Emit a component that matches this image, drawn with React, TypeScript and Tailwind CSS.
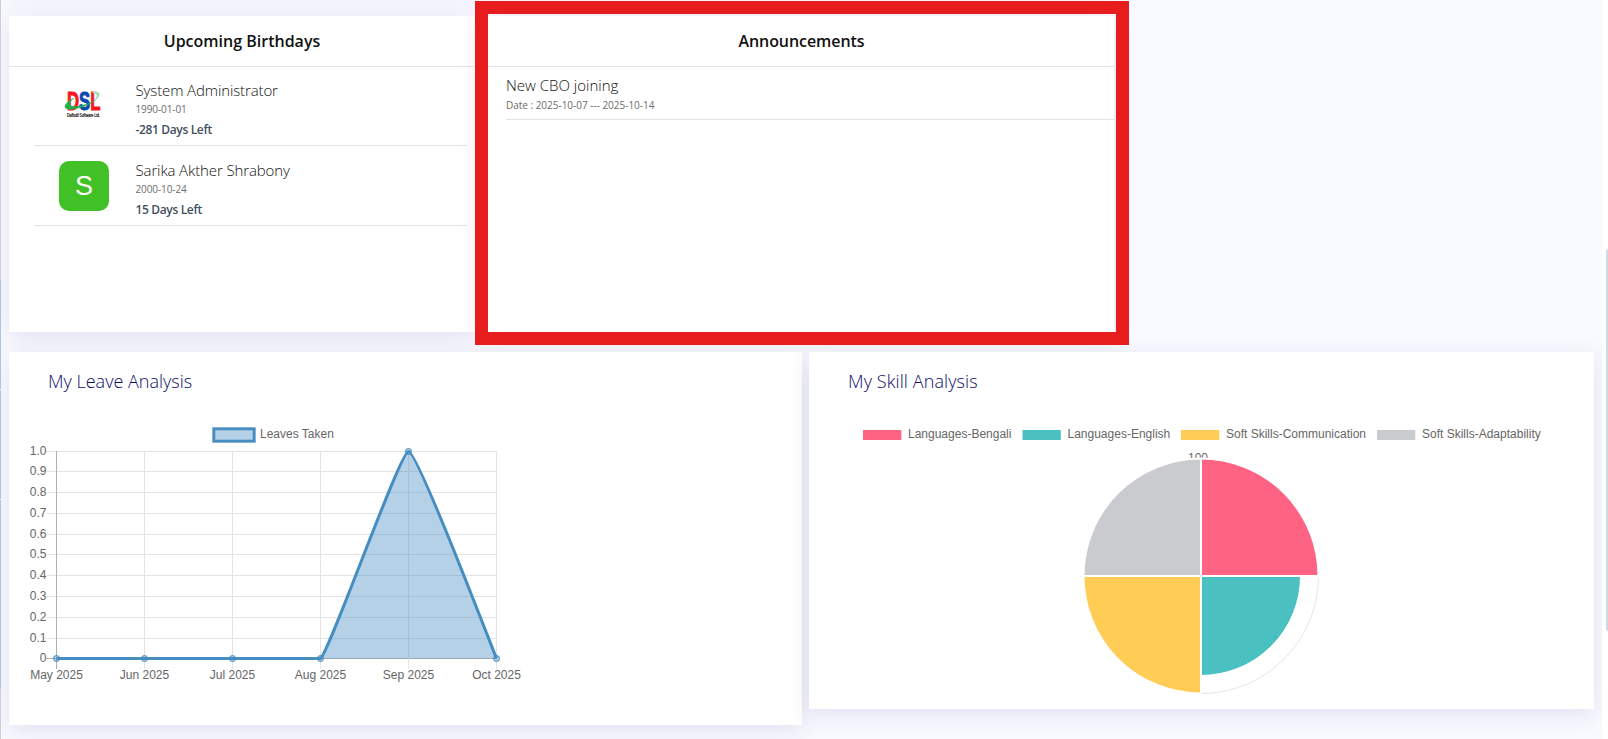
import React from "react";

const UI = "font-['Open_Sans','Noto_Sans',sans-serif]";
const SHADOW = "shadow-[0_6px_22px_rgba(50,50,130,0.12)]";

const xs = [56.5, 144.5, 232.5, 320.5, 408.5, 496.5];
const months = ["May 2025", "Jun 2025", "Jul 2025", "Aug 2025", "Sep 2025", "Oct 2025"];
const ticks: [string, number][] = [
  ["1.0", 451.5], ["0.9", 471.5], ["0.8", 492.5], ["0.7", 513.5], ["0.6", 534.5], ["0.5", 554.5],
  ["0.4", 575.5], ["0.3", 596.5], ["0.2", 617.5], ["0.1", 638.5], ["0", 658.5],
];

function LeaveChart() {
  const curve = "M56.5 658.5H320.5C329 653 400 451.5 408.5 451.5C417 451.5 489 640 496.5 658.5";
  return (
    <svg className="block h-[280px] w-[520px] font-['Liberation_Sans',Arial,sans-serif] text-[12px]" viewBox="9 412 520 280" fill="#666">
      <rect x="214" y="429" width="40" height="12" fill="#b5d1e7" stroke="#a2c3df" strokeWidth="4" />
      <rect x="214" y="429" width="40" height="12" fill="#b5d1e7" stroke="#468dc2" strokeWidth="2.6" />
      <text x="260" y="438">Leaves Taken</text>
      {ticks.map(([label, y]) => (
        <g key={label}>
          <line x1="46.5" x2="497" y1={y} y2={y} stroke={label === "0" ? "#b0b0b0" : "#e3e3e3"} />
          <text x="46.5" y={y + 3} textAnchor="end">{label}</text>
        </g>
      ))}
      {xs.map((x, i) => (
        <g key={x}>
          <line x1={x} x2={x} y1="451" y2="669" stroke={i === 0 ? "#b0b0b0" : "#e3e3e3"} />
          <text x={x} y="679" textAnchor="middle">{months[i]}</text>
        </g>
      ))}
      <path d={curve + "Z"} fill="#468dc2" fillOpacity="0.4" />
      <path d={curve} fill="none" stroke="#468dc2" strokeWidth="3" strokeLinejoin="round" />
      {xs.map((x, i) => (
        <circle key={x} cx={x} cy={i === 4 ? 451.5 : 658.5} r="3" fill="#468dc2" fillOpacity="0.4" stroke="#468dc2" />
      ))}
    </svg>
  );
}

const skills = [
  { name: "Languages-Bengali", color: "#ff6384", box: 863, text: 908 },
  { name: "Languages-English", color: "#4bc0c0", box: 1022.5, text: 1067.5 },
  { name: "Soft Skills-Communication", color: "#ffcd56", box: 1181, text: 1226 },
  { name: "Soft Skills-Adaptability", color: "#c9cbcf", box: 1377, text: 1422 },
];

function SkillChart() {
  return (
    <svg className="block h-[290px] w-[785px] font-['Liberation_Sans',Arial,sans-serif] text-[12px]" viewBox="809 412 785 290" fill="#666">
      {skills.map((s) => (
        <g key={s.name}>
          <rect x={s.box} y="430" width="38.3" height="10" fill={s.color} />
          <text x={s.text} y="438">{s.name}</text>
        </g>
      ))}
      <text x="1198" y="462" textAnchor="middle">100</text>
      <circle cx="1201" cy="576" r="117.5" fill="none" stroke="#e5e5e5" />
      <g stroke="#fff" strokeWidth="2">
        <path d="M1201 576V458.5A117.5 117.5 0 0 1 1318.5 576Z" fill="#ff6384" />
        <path d="M1201 576H1301A100 100 0 0 1 1201 676Z" fill="#4bc0c0" />
        <path d="M1201 576V693.5A117.5 117.5 0 0 1 1083.5 576Z" fill="#ffcd56" />
        <path d="M1201 576H1083.5A117.5 117.5 0 0 1 1201 458.5Z" fill="#c9cbcf" />
      </g>
    </svg>
  );
}

function CompanyLogo() {
  return (
    <svg className="size-[50px] overflow-visible font-['Liberation_Sans',Arial,sans-serif]" viewBox="0 0 50 50">
      <text x="8" y="29" className="font-bold" fontSize="26" strokeWidth="1" textLength="33.5" lengthAdjust="spacingAndGlyphs">
        <tspan fill="#fa1420" stroke="#fa1420">D</tspan>
        <tspan fill="#0b48b0" stroke="#0b48b0">S</tspan>
        <tspan fill="#fa1420" stroke="#fa1420">L</tspan>
      </text>
      <path d="M15 17C3 23 3 30 15 28C28 26 42 18 38 12C43 16 32 24 17 25.5C9 26 9 22 15 17Z" fill="#20b14d" stroke="#20b14d" strokeWidth="0.4" />
      <path d="M32 12C41 8 44 15 35 20C40 14 38 12 32 12Z" fill="#9bdcae" />
      <text x="8" y="35.5" fontSize="4.6" fill="#111" stroke="#111" strokeWidth="0.2" textLength="33" lengthAdjust="spacingAndGlyphs">Daffodil Software Ltd.</text>
    </svg>
  );
}

function Birthday({ avatar, name, date, left, rowClass }: { avatar: React.ReactNode; name: string; date: string; left: string; rowClass: string }) {
  return (
    <div className={`ml-[25px] mr-2 flex border-b border-[#e3e3e5] ${rowClass}`}>
      <div className="ml-[25px] w-[76.5px] shrink-0">{avatar}</div>
      <div className="-mt-px whitespace-nowrap">
        <div className="h-[22px] text-[15px] leading-5 font-light tracking-[-0.12px] text-[#111]">{name}</div>
        <div className="h-[15px] text-[10px] leading-[15px] tracking-[-0.1px] text-[#6c6c6c]">{date}</div>
        <div className="mt-[3px] text-[12px] leading-5 font-semibold tracking-[-0.35px] text-[#41505d]">{left}</div>
      </div>
    </div>
  );
}

export default function App() {
  return (
    <div className={`relative flex h-[739px] w-[1608px] overflow-hidden bg-[#f9faff] ${UI}`}>
      <div className="flex w-px shrink-0 flex-col">
        <div className="h-[280px] bg-[#cfcfd3]" />
        <div className="h-[109px] bg-[#adc3e6]" />
        <div className="mt-px h-[109px] bg-[#adc3e6]" />
        <div className="mt-px h-[189px] bg-[#adc3e6]" />
        <div className="flex-1 bg-[#cfcfd3]" />
      </div>
      <main className="w-[1601px] shrink-0 overflow-hidden pl-2">
        <div className={`-mt-[10px] h-[6px] w-[1105px] bg-white ${SHADOW}`} />
        <div className="mt-5 flex gap-[7px]">
          <section className={`h-[316px] w-[466px] bg-white ${SHADOW}`}>
            <h2 className="h-[51px] border-b border-[#e3e3e5] pt-[9px] text-center text-[16px] leading-8 font-semibold text-[#111]">Upcoming Birthdays</h2>
            <Birthday avatar={<CompanyLogo />} name="System Administrator" date="1990-01-01" left="-281 Days Left" rowClass="h-[79px] pt-[14px]" />
            <Birthday
              avatar={<div className="flex size-[50px] items-center justify-center rounded-[10px] bg-[#42c127] font-['Liberation_Sans',Arial,sans-serif] text-[27px] text-white">S</div>}
              name="Sarika Akther Shrabony" date="2000-10-24" left="15 Days Left" rowClass="h-20 pt-[15px]"
            />
          </section>
          <section className={`h-[316px] w-[632px] bg-white pl-[7px] ${SHADOW}`}>
            <h2 className="-ml-[7px] h-[51px] border-b border-[#e3e3e5] pt-[9px] pl-[7px] text-center text-[16px] leading-8 font-semibold tracking-[-0.06px] text-[#111]">Announcements</h2>
            <div className="ml-[17px] h-[53px] border-b border-[#e3e3e5] pt-2">
              <div className="h-[22px] text-[15px] leading-5 font-light text-[#111]">New CBO joining</div>
              <div className="text-[10px] leading-4 tracking-[-0.02px] text-[#6c6c6c]">Date : 2025-10-07 --- 2025-10-14</div>
            </div>
          </section>
        </div>
        <div className="mt-5 flex items-start gap-[7px]">
          <section className={`h-[373px] w-[793px] bg-white ${SHADOW}`}>
            <h2 className="h-[60px] pt-[13px] pl-[39px] text-[18px] leading-8 font-light text-[#0c0c68]">My Leave Analysis</h2>
            <LeaveChart />
          </section>
          <section className={`h-[357px] w-[785px] bg-white ${SHADOW}`}>
            <h2 className="h-[60px] pt-[13px] pl-[39px] text-[18px] leading-8 font-light tracking-[0.1px] text-[#0c0c68]">My Skill Analysis</h2>
            <SkillChart />
          </section>
        </div>
      </main>
      <div className="flex flex-1 justify-end bg-white pt-[249px]">
        <div className="h-[382px] w-[2px] rounded-l bg-[#d0dae5]" />
      </div>
      <div className="pointer-events-none absolute top-px left-[475px] h-[344px] w-[654px] border-[13px] border-[#e61c1d]" />
    </div>
  );
}
